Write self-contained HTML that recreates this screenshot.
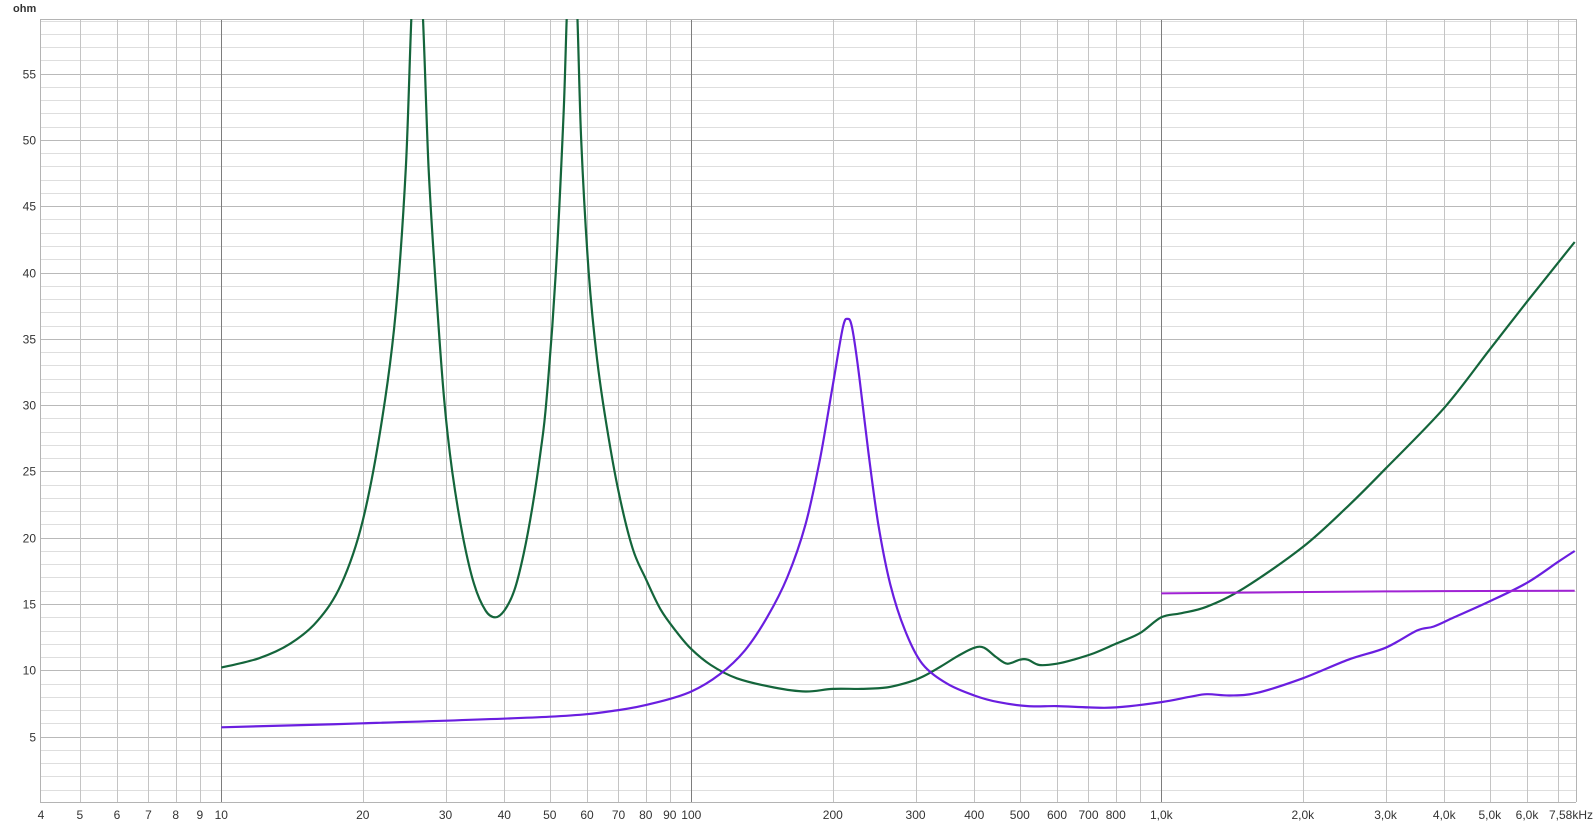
<!DOCTYPE html>
<html><head><meta charset="utf-8">
<style>
html,body{margin:0;padding:0;background:#fff;}
svg{display:block;}
text{font-family:"Liberation Sans",sans-serif;font-size:12px;fill:#333;}
</style></head>
<body>
<svg id="c" width="1595" height="826" xmlns="http://www.w3.org/2000/svg">
<defs><clipPath id="cp"><rect x="40" y="19" width="1536" height="783"/></clipPath></defs>
<g id="grid"></g>
<g id="curves" clip-path="url(#cp)"></g>
<g id="labels"></g>
</svg>
<script>
var NS="http://www.w3.org/2000/svg";
function X(f){return 221.3+470*Math.log10(f/10);}
function Y(v){return 802.9-v*13.26;}
var L=40,R=1576,T=19,B=802;
var g=document.getElementById('grid'),lab=document.getElementById('labels'),cv=document.getElementById('curves');
function line(x1,y1,x2,y2,c,w,p){var l=document.createElementNS(NS,'line');l.setAttribute('x1',x1);l.setAttribute('y1',y1);l.setAttribute('x2',x2);l.setAttribute('y2',y2);l.setAttribute('stroke',c);l.setAttribute('stroke-width',w||1);(p||g).appendChild(l);}
function txt(x,y,s,a){var t=document.createElementNS(NS,'text');t.setAttribute('x',x);t.setAttribute('y',y);t.setAttribute('text-anchor',a||'middle');t.textContent=s;lab.appendChild(t);}
for(var v=1;v<=59;v++){var y=Math.round(Y(v))+0.5;line(L,y,R,y,v%5==0?'#b9b9b9':'#dedede',1);if(v%5==0)txt(36,y+4,''+v,'end');}
var fs=[];
for(var d=1;d<=1000;d*=10)for(var k=1;k<=9;k++){var f=k*d;if(f>=4&&f<=7000)fs.push(f);}
fs.forEach(function(f){var x=Math.round(X(f))+0.5;if(x<L)return;var dec=(f==10||f==100||f==1000);line(x,T,x,B,dec?'#7d7d7d':'#c4c4c4',1);});
line(L,T+0.5,R,T+0.5,'#b4b4b4');line(L+0.5,T,L+0.5,B,'#b4b4b4');line(L,B+0.5,R,B+0.5,'#b4b4b4');line(R+0.5,T,R+0.5,B,'#b4b4b4');
var t=document.createElementNS(NS,'text');t.setAttribute('x',13);t.setAttribute('y',12);t.setAttribute('style','font-weight:bold;font-size:11px');t.textContent='ohm';lab.appendChild(t);
var xl=[[4,'4'],[5,'5'],[6,'6'],[7,'7'],[8,'8'],[9,'9'],[10,'10'],[20,'20'],[30,'30'],[40,'40'],[50,'50'],[60,'60'],[70,'70'],[80,'80'],[90,'90'],[100,'100'],[200,'200'],[300,'300'],[400,'400'],[500,'500'],[600,'600'],[700,'700'],[800,'800'],[1000,'1,0k'],[2000,'2,0k'],[3000,'3,0k'],[4000,'4,0k'],[5000,'5,0k'],[6000,'6,0k']];
xl.forEach(function(a){var x=a[0]==4?41:X(a[0]);txt(x,819,a[1]);});
txt(1593,819,'7,58kHz','end');
function path(pts,col,w){var P=pts.map(function(p){return [X(p[0]),Y(p[1])];});
var d='M'+P[0][0].toFixed(1)+','+P[0][1].toFixed(1);
for(var i=0;i<P.length-1;i++){var p0=P[i-1]||P[i],p1=P[i],p2=P[i+1],p3=P[i+2]||P[i+1];
var c1=[p1[0]+(p2[0]-p0[0])/6,p1[1]+(p2[1]-p0[1])/6],c2=[p2[0]-(p3[0]-p1[0])/6,p2[1]-(p3[1]-p1[1])/6];
d+=' C'+c1[0].toFixed(1)+','+c1[1].toFixed(1)+' '+c2[0].toFixed(1)+','+c2[1].toFixed(1)+' '+p2[0].toFixed(1)+','+p2[1].toFixed(1);}
var e=document.createElementNS(NS,'path');e.setAttribute('d',d);e.setAttribute('fill','none');e.setAttribute('stroke',col);e.setAttribute('stroke-width',w);e.setAttribute('stroke-linejoin','round');cv.appendChild(e);}
var green=[[10,10.2],[12,10.9],[14,12],[16,13.7],[18,16.5],[20,21.3],[22,29],[23.5,37],[24.7,48],[25.6,62],[26.6,62],[27.6,48],[28.6,39],[29.8,30.4],[31,25],[32.7,20],[34.5,16.5],[36.5,14.5],[38.3,14],[40,14.5],[42,16],[44,18.8],[46,22.5],[47.8,26.5],[49.2,30.4],[51.5,40],[53.5,52],[54.8,62],[56.8,62],[58.3,50],[60.5,40],[63,33.5],[66,28.5],[70,23.5],[75,19.2],[80,16.9],[86,14.6],[93,12.9],[100,11.6],[110,10.4],[125,9.4],[150,8.7],[175,8.4],[200,8.6],[230,8.6],[260,8.7],[290,9.1],[310,9.5],[340,10.3],[370,11.1],[400,11.7],[420,11.7],[445,11],[470,10.5],[500,10.8],[520,10.8],[550,10.4],[600,10.5],[650,10.8],[720,11.3],[800,12],[900,12.8],[1000,14],[1100,14.3],[1250,14.8],[1500,16.2],[2000,19.3],[2500,22.4],[3000,25.2],[4000,29.8],[5000,34.2],[6000,37.8],[7580,42.3]];
var purple=[[10,5.7],[20,6],[50,6.5],[70,7],[85,7.6],[100,8.4],[115,9.7],[130,11.5],[145,14],[160,17],[175,21],[188,26],[200,31.5],[210,35.8],[215,36.5],[220,35.8],[228,32],[238,26.5],[250,21],[265,16.5],[285,13],[310,10.5],[350,9],[400,8.1],[450,7.6],[520,7.3],[600,7.3],[700,7.2],[800,7.2],[1000,7.6],[1150,8],[1250,8.2],[1400,8.1],[1600,8.3],[2000,9.4],[2500,10.8],[3000,11.7],[3500,13],[3800,13.3],[4200,14],[5000,15.2],[6000,16.6],[7000,18.2],[7580,19]];
path(green,'#14653b',2.2);
path(purple,'#6a1ee0',2.2);
path([[1000,15.8],[3000,15.95],[7580,16]],'#a022d4',2);
</script>
</body></html>
